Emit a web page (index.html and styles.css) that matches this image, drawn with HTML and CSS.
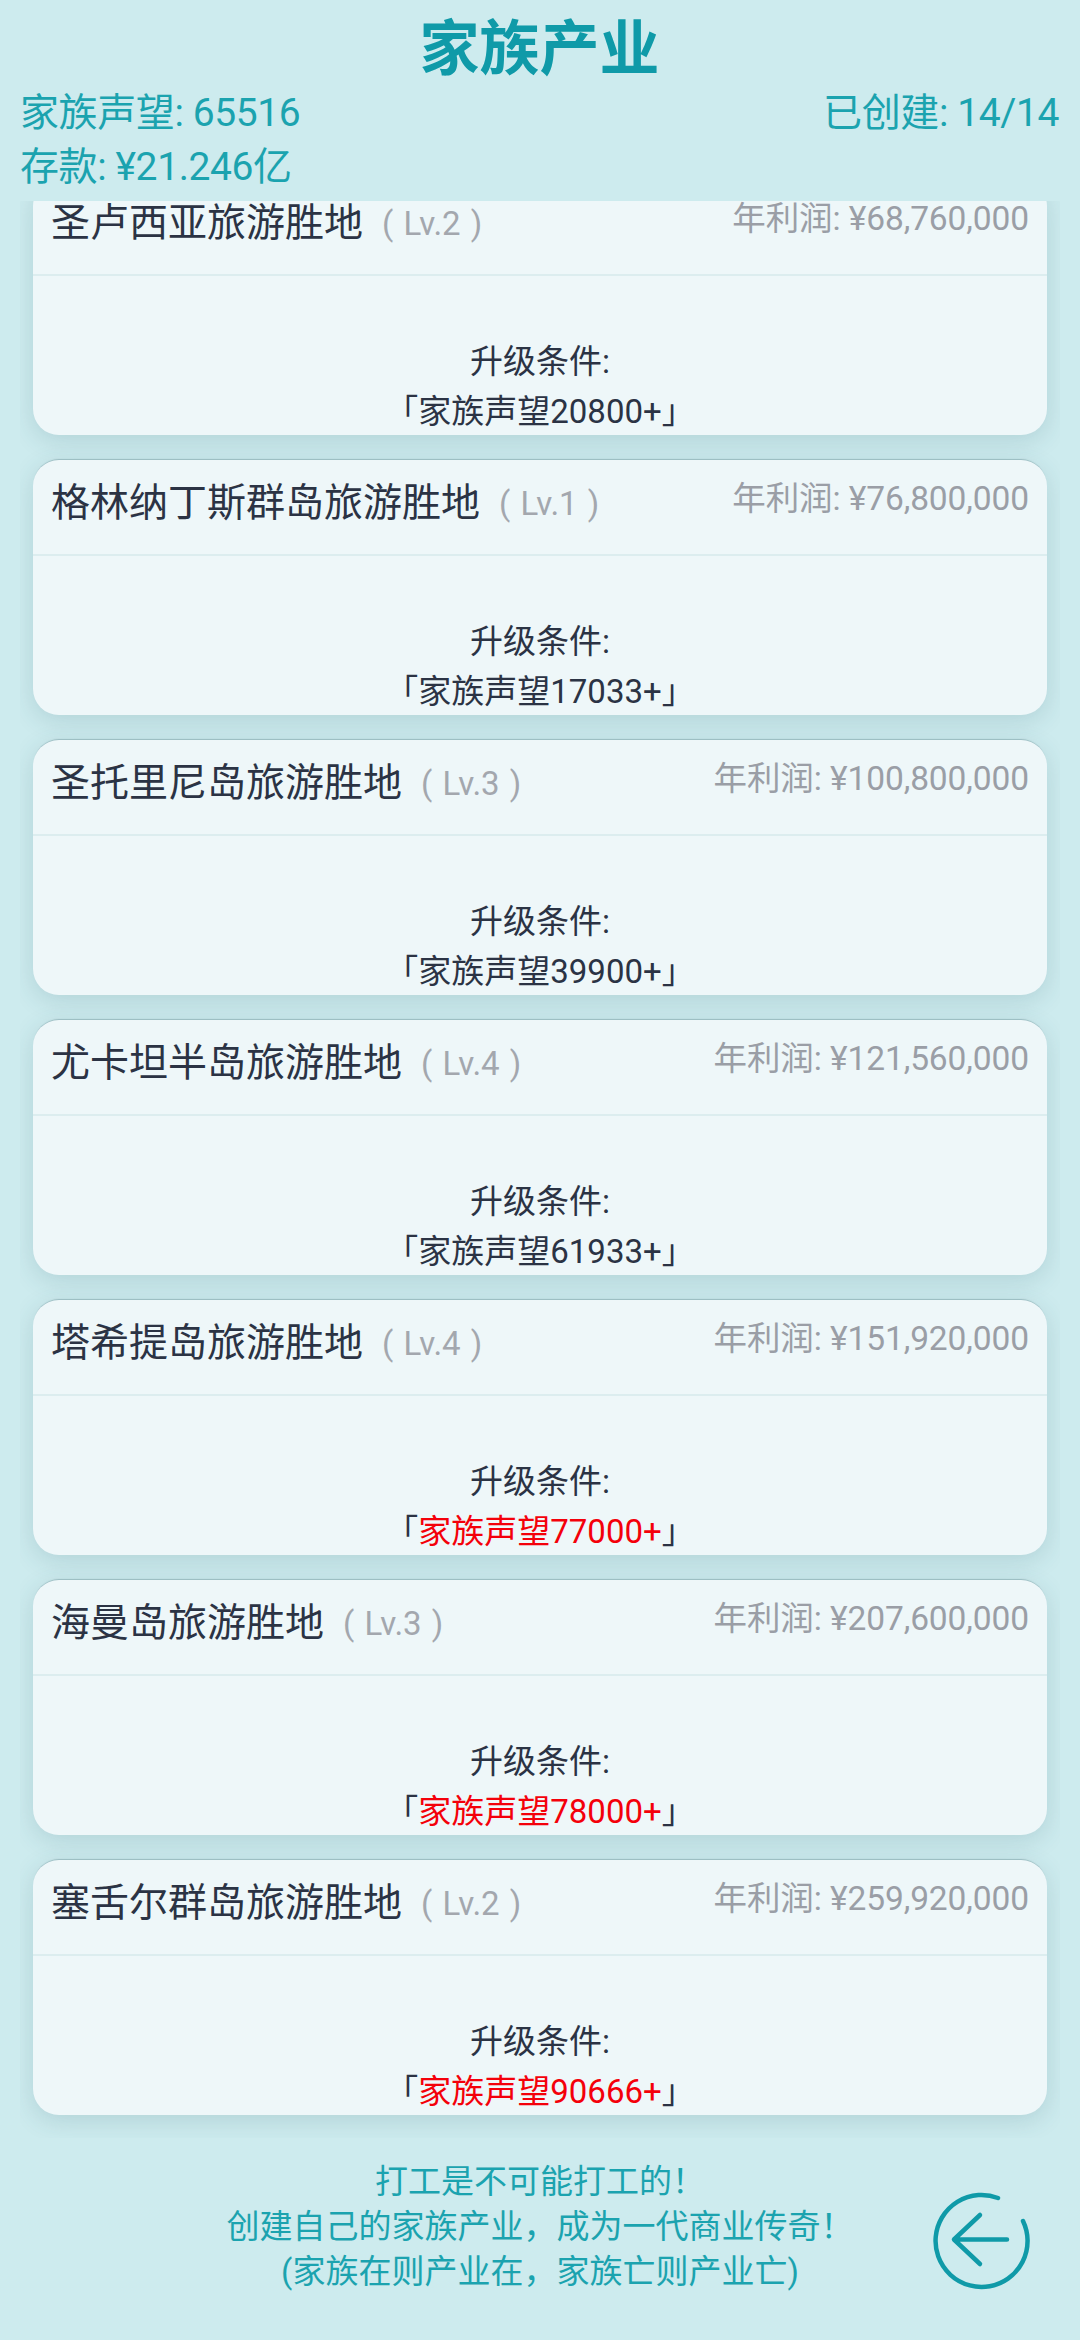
FILE: index.html
```html
<!DOCTYPE html>
<html lang="zh-CN">
<head>
<meta charset="utf-8">
<title>家族产业</title>
<link rel="stylesheet" href="styles.css">
</head>
<body>
<div class="page">
  <header class="top">
    <h1 class="page-title">家族产业</h1>
    <div class="stats">
      <span>家族声望: 65516</span>
      <span>已创建: 14/14</span>
    </div>
    <div class="stats">
      <span>存款: ¥21.246亿</span>
    </div>
  </header>

  <main class="list">
    <div class="list-inner">
      <section class="card">
        <div class="card-head">
          <div class="name">圣卢西亚旅游胜地<span class="lv">( Lv.2 )</span></div>
          <div class="profit">年利润: ¥68,760,000</div>
        </div>
        <div class="card-body">
          <div>升级条件:</div>
          <div><span class="br">「</span>家族声望20800+<span class="br">」</span></div>
        </div>
      </section>
      <section class="card">
        <div class="card-head">
          <div class="name">格林纳丁斯群岛旅游胜地<span class="lv">( Lv.1 )</span></div>
          <div class="profit">年利润: ¥76,800,000</div>
        </div>
        <div class="card-body">
          <div>升级条件:</div>
          <div><span class="br">「</span>家族声望17033+<span class="br">」</span></div>
        </div>
      </section>
      <section class="card">
        <div class="card-head">
          <div class="name">圣托里尼岛旅游胜地<span class="lv">( Lv.3 )</span></div>
          <div class="profit">年利润: ¥100,800,000</div>
        </div>
        <div class="card-body">
          <div>升级条件:</div>
          <div><span class="br">「</span>家族声望39900+<span class="br">」</span></div>
        </div>
      </section>
      <section class="card">
        <div class="card-head">
          <div class="name">尤卡坦半岛旅游胜地<span class="lv">( Lv.4 )</span></div>
          <div class="profit">年利润: ¥121,560,000</div>
        </div>
        <div class="card-body">
          <div>升级条件:</div>
          <div><span class="br">「</span>家族声望61933+<span class="br">」</span></div>
        </div>
      </section>
      <section class="card">
        <div class="card-head">
          <div class="name">塔希提岛旅游胜地<span class="lv">( Lv.4 )</span></div>
          <div class="profit">年利润: ¥151,920,000</div>
        </div>
        <div class="card-body">
          <div>升级条件:</div>
          <div><span class="br">「</span><span class="unmet">家族声望77000+</span><span class="br">」</span></div>
        </div>
      </section>
      <section class="card">
        <div class="card-head">
          <div class="name">海曼岛旅游胜地<span class="lv">( Lv.3 )</span></div>
          <div class="profit">年利润: ¥207,600,000</div>
        </div>
        <div class="card-body">
          <div>升级条件:</div>
          <div><span class="br">「</span><span class="unmet">家族声望78000+</span><span class="br">」</span></div>
        </div>
      </section>
      <section class="card">
        <div class="card-head">
          <div class="name">塞舌尔群岛旅游胜地<span class="lv">( Lv.2 )</span></div>
          <div class="profit">年利润: ¥259,920,000</div>
        </div>
        <div class="card-body">
          <div>升级条件:</div>
          <div><span class="br">「</span><span class="unmet">家族声望90666+</span><span class="br">」</span></div>
        </div>
      </section>
    </div>
  </main>

  <footer class="bottom">
    <div class="slogan">
      <div>打工是不可能打工的！</div>
      <div>创建自己的家族产业，成为一代商业传奇！</div>
      <div>(家族在则产业在，家族亡则产业亡)</div>
    </div>
    <svg class="back" viewBox="0 0 100 100" aria-label="返回">
      <path class="back-line" d="M68 8 A 46 46 0 1 0 93 31"/>
      <path class="back-line" d="M77 49.5 H24 M50 25 L24 49.5 L50 74"/>
    </svg>
  </footer>
</div>
</body>
</html>
```
FILE: styles.css
```css
* { box-sizing: border-box; }
html, body { margin: 0; padding: 0; }
body {
  font-family: Roboto, "Noto Sans CJK SC", sans-serif;
  background: #cdebee;
  color: #2b3344;
}
.page {
  width: 1080px;
  height: 2340px;
  display: flex;
  flex-direction: column;
  overflow: hidden;
}
.top {
  height: 201px;
  padding: 15px 21px 0 20px;
  color: #1ba3af;
  flex: none;
}
.page-title {
  margin: 0 0 1px;
  font-size: 60px;
  line-height: 70px;
  font-weight: 700;
  text-align: center;
  color: #0f9aa8;
}
.stats {
  display: flex;
  justify-content: space-between;
  font-size: 39px;
  line-height: 54px;
  letter-spacing: -.4px;
}
.list {
  margin: 0 20px;
  height: 1937px;
  flex: none;
  overflow: hidden;
}
.list-inner {
  margin-top: -21px;
  padding: 0 13px;
  display: flex;
  flex-direction: column;
  gap: 25px;
}
.card {
  height: 255px;
  background: #eef7f9;
  border-radius: 26px;
  box-shadow: 0 6px 24px rgba(40, 90, 100, .16), 0 -2px 1px -1px rgba(60, 100, 110, .3);
  display: flex;
  flex-direction: column;
}
.card-head {
  height: 96px;
  flex: none;
  padding: 0 18px 0 18px;
  border-bottom: 2px solid #dcedef;
  display: flex;
  justify-content: space-between;
}
.name {
  font-size: 39px;
  line-height: 86px;
  color: #2b3344;
  white-space: nowrap;
}
.lv {
  margin-left: 19px;
  font-size: 33px;
  word-spacing: 2px;
  vertical-align: 1px;
  color: #a3a7ae;
}
.profit {
  font-size: 33.5px;
  line-height: 78px;
  letter-spacing: -.1px;
  color: #9a9ea6;
  white-space: nowrap;
}
.card-body {
  flex: 1;
  margin-bottom: -2px;
  display: flex;
  flex-direction: column;
  justify-content: flex-end;
  align-items: center;
  font-size: 33px;
  line-height: 50px;
  color: #2b3344;
}
.br { font-feature-settings: "halt"; }
.unmet { color: #f4000a; }
.bottom {
  flex: 1;
  display: flex;
  align-items: flex-start;
  padding: 21px 50px 0 150px;
}
.slogan {
  width: 780px;
  flex: none;
  font-size: 33px;
  line-height: 45px;
  color: #1ba3af;
  text-align: center;
}
.back {
  width: 100px;
  height: 100px;
  margin-top: 31px;
  flex: none;
}
.back-line {
  fill: none;
  stroke: #0f9aa8;
  stroke-width: 4.5;
  stroke-linecap: round;
  stroke-linejoin: round;
}
```
